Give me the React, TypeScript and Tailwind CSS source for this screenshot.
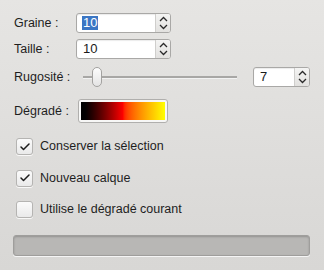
import { Check } from "lucide-react";

const font = { fontFamily: '"Liberation Sans", Arial, sans-serif' };

function Spin({ value, width, selected }: { value: string; width: string; selected?: boolean }) {
  return (
    <div className={`flex h-[20px] ${width} overflow-hidden rounded-[3px] border border-[#a9a8a6] bg-white shadow-[inset_0_1px_1px_rgba(0,0,0,0.08)]`}>
      <div className="flex flex-1 items-center pl-[5px] text-[13px] text-[#1a1a1a]">
        {selected ? (
          <span className="bg-[#3b76c4] px-[1px] leading-[14px] text-white">{value}</span>
        ) : (
          <span className="px-[1px]">{value}</span>
        )}
      </div>
      <div className="flex w-[15px] flex-col items-center justify-center border-l border-[#cfcecc] bg-gradient-to-b from-[#f4f4f3] to-[#e2e1df]">
        <svg width="9" height="16" viewBox="0 0 9 16" fill="none" stroke="#2a2a2a" strokeWidth="1.3">
          <path d="M1 6 L4.5 2.5 L8 6" />
          <path d="M1 10 L4.5 13.5 L8 10" />
        </svg>
      </div>
    </div>
  );
}

function CheckRow({ label, checked }: { label: string; checked?: boolean }) {
  return (
    <div className="flex h-[17px] items-center leading-[17px]">
      <div className="ml-[2px] flex h-[17px] w-[17px] items-center justify-center rounded-[3px] border border-[#b5b4b2] bg-gradient-to-b from-[#fbfbfb] to-[#eaeaea] shadow-[0_1px_0_rgba(255,255,255,0.8)]">
        {checked && <Check className="h-[12px] w-[12px] text-[#1c1c1c]" strokeWidth={3} />}
      </div>
      <span className="ml-[7px] text-[12.5px] text-[#1e1e1e]">{label}</span>
    </div>
  );
}

export default function App() {
  return (
    <div style={font} className="h-[270px] w-[324px] bg-gradient-to-b from-[#e6e5e3] to-[#d8d7d5] pl-[14px] pt-[13px] text-[12.5px] text-[#1e1e1e]">
      <div className="flex h-[20px] items-center">
        <span className="w-[62px]">Graine :</span>
        <Spin value="10" width="w-[95px]" selected />
      </div>
      <div className="mt-[6px] flex h-[20px] items-center">
        <span className="w-[62px]">Taille :</span>
        <Spin value="10" width="w-[95px]" />
      </div>

      <div className="mt-[8px] flex h-[20px] items-center">
        <span className="w-[69px]">Rugosité :</span>
        <div className="relative flex h-[20px] w-[154px] items-center">
          <div className="h-[2px] w-full bg-[#a8a7a5] shadow-[0_1px_0_#f2f2f2]" />
          <div className="absolute left-[9px] top-0 h-[20px] w-[10px] rounded-[5px] border border-[#a3a2a0] bg-gradient-to-b from-[#fdfdfd] to-[#e4e4e4]" />
        </div>
        <div className="ml-[16px]">
          <Spin value="7" width="w-[57px]" />
        </div>
      </div>

      <div className="mt-[12px] flex h-[24px] items-center">
        <span className="w-[64px]">Dégradé :</span>
        <div className="flex h-[24px] w-[90px] items-center justify-center rounded-[3px] border border-[#b0afad] bg-[#f7f7f6]">
          <div className="h-[18px] w-[84px] bg-gradient-to-r from-[#000000] via-[#ff0000] to-[#ffff00]" />
        </div>
      </div>

      <div className="mt-[15px] flex flex-col gap-[14.5px]">
        <CheckRow label="Conserver la sélection" checked />
        <CheckRow label="Nouveau calque" checked />
        <CheckRow label="Utilise le dégradé courant" />
      </div>

      <div className="mt-[17px] h-[21px] w-[297px] -translate-x-[1px] rounded-[3px] border border-[#9f9e9c] bg-[#b8b7b5] shadow-[inset_0_1px_2px_rgba(0,0,0,0.2),0_1px_0_#f5f5f5]" />
    </div>
  );
}
